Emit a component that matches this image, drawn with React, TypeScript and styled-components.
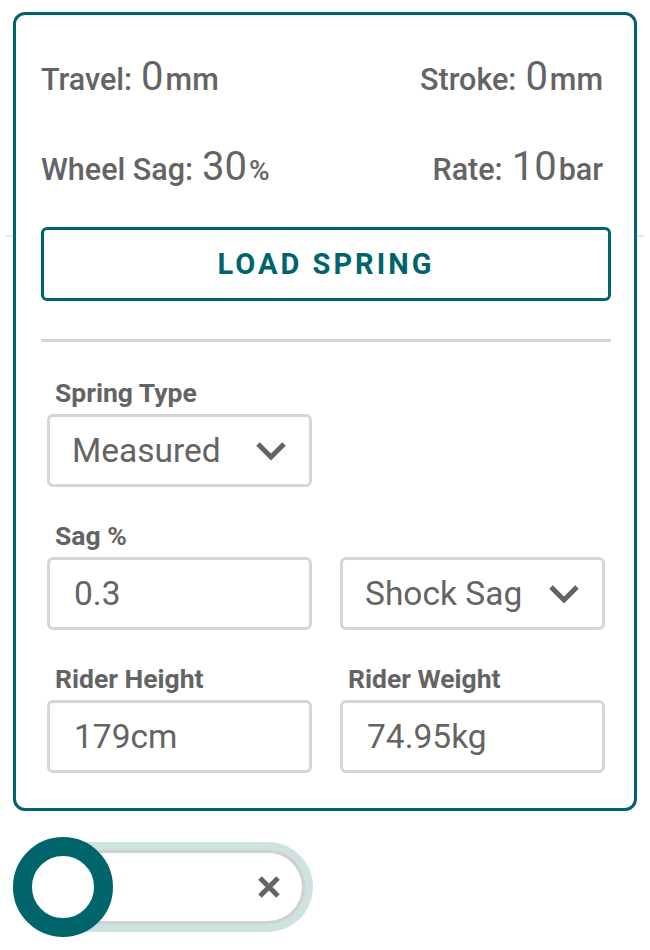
import React from "react";
import styled, { createGlobalStyle } from "styled-components";

const teal = "#00656a";
const grey = "#646464";

const GlobalStyle = createGlobalStyle`
  body {
    margin: 0;
    background: #ffffff;
    font-family: Roboto, "Liberation Sans", sans-serif;
    color: ${grey};
  }
`;

const Page = styled.div`
  position: relative;
  padding: 12px 13px;

  &::before {
    position: absolute;
    left: 6px;
    right: 6px;
    top: 235px;
    height: 2px;
    content: "";
    background: #e8e8e8;
  }
`;

const Card = styled.section`
  position: relative;
  z-index: 1;
  box-sizing: border-box;
  width: 624px;
  padding: 42px 23px 35px 25px;
  background: #ffffff;
  border: 3px solid ${teal};
  border-radius: 12px;
`;

const Stats = styled.div`
  display: grid;
  grid-template-columns: 1fr auto;
  grid-auto-rows: 40px;
  row-gap: 50px;
`;

const Stat = styled.div<{ $right?: boolean }>`
  display: flex;
  align-items: baseline;
  justify-self: ${(p) => (p.$right ? "end" : "start")};
  padding-right: ${(p) => (p.$right ? "8px" : "0")};
  line-height: 1;
`;

const StatLabel = styled.span`
  font-size: 30.5px;
  font-weight: 500;
  margin-right: 9px;
`;

const StatValue = styled.span`
  font-size: 40px;
  font-weight: 400;
  margin-right: 2px;
`;

const StatUnit = styled.span<{ $small?: boolean }>`
  font-size: ${(p) => (p.$small ? "28px" : "30.5px")};
  font-weight: 500;
`;

const LoadButton = styled.button`
  display: block;
  box-sizing: border-box;
  width: 100%;
  height: 74px;
  margin-top: 40px;
  background: #ffffff;
  border: 3px solid ${teal};
  border-radius: 6px;
  color: ${teal};
  font-family: inherit;
  font-size: 29px;
  font-weight: 700;
  letter-spacing: 3px;
  cursor: pointer;
`;

const Divider = styled.hr`
  height: 3px;
  margin: 38px 0 37px;
  background: #d4d4d4;
  border: none;
`;

const Form = styled.div`
  display: grid;
  grid-template-columns: 265px 265px;
  column-gap: 28px;
  row-gap: 35px;
  align-items: end;
  margin: 0 5px 0 6px;
`;

const Field = styled.div`
  display: flex;
  flex-direction: column;
`;

const FieldLabel = styled.label`
  padding-left: 8px;
  margin-bottom: 7px;
  font-size: 26.5px;
  font-weight: 700;
  line-height: 28px;
`;

const boxStyles = `
  box-sizing: border-box;
  width: 100%;
  height: 73px;
  padding: 0 22px 0 24px;
  background: #ffffff;
  border: 3px solid #d6d6d6;
  border-radius: 6px;
  color: ${grey};
  font-family: Roboto, "Liberation Sans", sans-serif;
  font-size: 33.5px;
  font-weight: 400;
`;

const TextBox = styled.input`
  ${boxStyles}
  outline: none;
`;

const SelectBox = styled.button`
  ${boxStyles}
  display: flex;
  align-items: center;
  justify-content: space-between;
  padding-left: 22px;
  text-align: left;
  cursor: pointer;
`;

const Toggle = styled.div`
  position: relative;
  display: flex;
  align-items: center;
  width: 300px;
  height: 100px;
  margin-top: 26px;
`;

const Track = styled.div`
  box-sizing: border-box;
  display: flex;
  align-items: center;
  justify-content: flex-end;
  width: 284px;
  height: 74px;
  margin-left: 8px;
  padding-right: 22px;
  border: 3px solid #d0d0d0;
  border-radius: 37px;
  box-shadow: 0 0 0 8px #cde2e1;
  background: #ffffff;
`;

const Knob = styled.span`
  position: absolute;
  left: 0;
  top: 0;
  box-sizing: border-box;
  width: 100px;
  height: 100px;
  background: #ffffff;
  border: 19px solid ${teal};
  border-radius: 50%;
`;

const Chevron = () => (
  <svg width="32" height="20" viewBox="0 0 32 20">
    <polyline
      points="3,3 16,16 29,3"
      fill="none"
      stroke={grey}
      strokeWidth="5"
    />
  </svg>
);

const Cross = () => (
  <svg width="22" height="22" viewBox="0 0 22 22">
    <path d="M2 2 L20 20 M20 2 L2 20" stroke={grey} strokeWidth="5" />
  </svg>
);

const App: React.FC = () => {
  return (
    <Page>
      <GlobalStyle />
      <Card>
        <Stats>
          <Stat>
            <StatLabel>Travel:</StatLabel>
            <StatValue>0</StatValue>
            <StatUnit>mm</StatUnit>
          </Stat>
          <Stat $right>
            <StatLabel>Stroke:</StatLabel>
            <StatValue>0</StatValue>
            <StatUnit>mm</StatUnit>
          </Stat>
          <Stat>
            <StatLabel>Wheel Sag:</StatLabel>
            <StatValue>30</StatValue>
            <StatUnit $small>%</StatUnit>
          </Stat>
          <Stat $right>
            <StatLabel>Rate:</StatLabel>
            <StatValue>10</StatValue>
            <StatUnit>bar</StatUnit>
          </Stat>
        </Stats>

        <LoadButton>LOAD SPRING</LoadButton>
        <Divider />

        <Form>
          <Field>
            <FieldLabel>Spring Type</FieldLabel>
            <SelectBox>
              Measured
              <Chevron />
            </SelectBox>
          </Field>
          <div />
          <Field>
            <FieldLabel>Sag %</FieldLabel>
            <TextBox defaultValue="0.3" />
          </Field>
          <SelectBox>
            Shock Sag
            <Chevron />
          </SelectBox>
          <Field>
            <FieldLabel>Rider Height</FieldLabel>
            <TextBox defaultValue="179cm" />
          </Field>
          <Field>
            <FieldLabel>Rider Weight</FieldLabel>
            <TextBox defaultValue="74.95kg" />
          </Field>
        </Form>
      </Card>

      <Toggle>
        <Track>
          <Cross />
        </Track>
        <Knob />
      </Toggle>
    </Page>
  );
};

export default App;
